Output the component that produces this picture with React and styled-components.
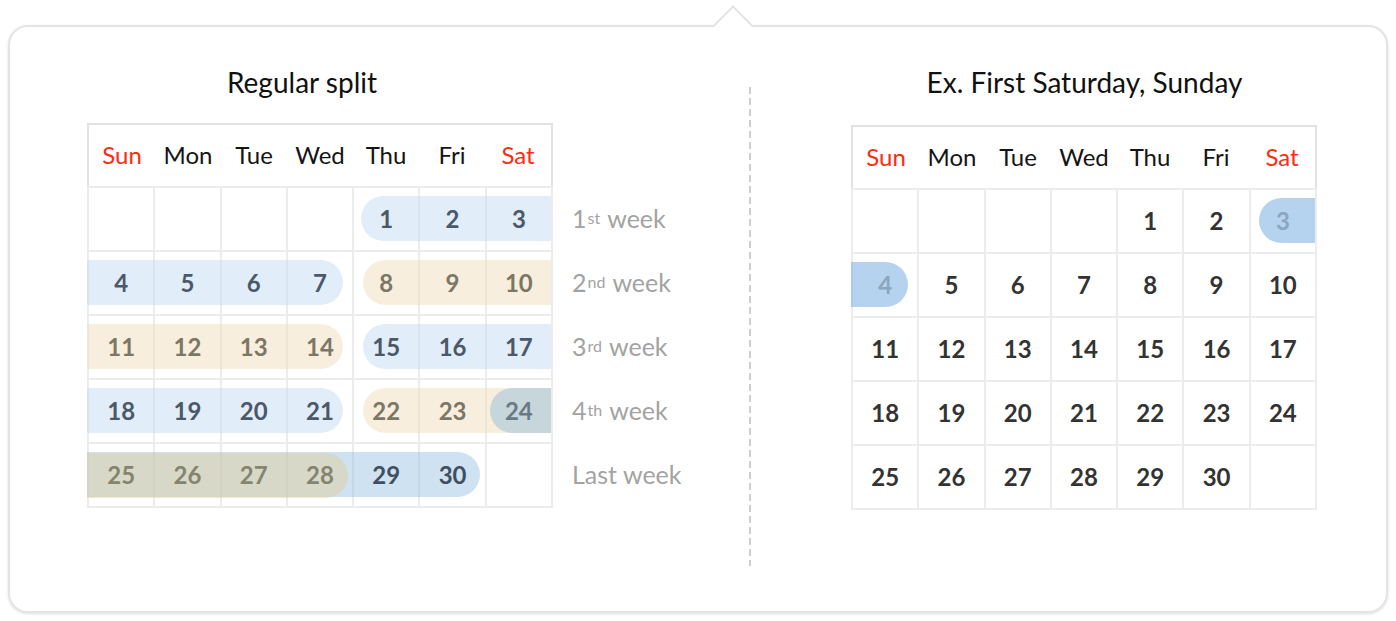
import React from 'react';
import styled, { createGlobalStyle } from 'styled-components';

const Global = createGlobalStyle`
  html, body { margin: 0; padding: 0; background: #fff; }
  body { font-family: Lato, "Noto Sans", sans-serif; }
`;

const Page = styled.div`
  padding: 25px 8px 8px;
`;

const Card = styled.div`
  position: relative;
  box-sizing: border-box;
  width: 1380px;
  height: 588px;
  border: 2px solid #e4e4e4;
  border-radius: 20px;
  box-shadow: 0 1px 3px rgba(0, 0, 0, 0.12);
  background: #fff;
  display: flex;
`;

const Notch = styled.div`
  position: absolute;
  left: 709px;
  top: -16px;
  width: 28px;
  height: 28px;
  box-sizing: border-box;
  background: #fff;
  border-top: 2px solid #e4e4e4;
  border-left: 2px solid #e4e4e4;
  transform: rotate(45deg);
`;

const Section = styled.section`
  box-sizing: border-box;
  width: ${(p) => p.$width}px;
  padding-left: ${(p) => p.$pl}px;
  padding-top: 38px;
  display: flex;
  flex-direction: column;
`;

const Title = styled.h2`
  margin: 0 0 ${(p) => p.$gap}px;
  width: ${(p) => p.$w}px;
  font-weight: 400;
  font-size: 28px;
  line-height: 34px;
  color: #111;
  text-align: center;
`;

const Divider = styled.div`
  flex: none;
  width: 2px;
  height: 479px;
  margin-top: 60px;
  background: repeating-linear-gradient(to bottom, #cfcfcf 0 7px, transparent 7px 11px);
`;

const CalRow = styled.div`
  display: flex;
  gap: 19px;
`;

const Calendar = styled.div`
  width: 466px;
  display: flex;
  flex-direction: column;
`;

const Head = styled.div`
  box-sizing: border-box;
  height: 63px;
  display: grid;
  grid-template-columns: repeat(7, 1fr);
  align-items: center;
  border: 2px solid #e2e2e2;
  border-bottom: none;
  padding-bottom: 2px;
`;

const Day = styled.div`
  text-align: center;
  font-size: 24px;
  color: ${(p) => (p.$weekend ? '#ff2a10' : '#151515')};
`;

const Body = styled.div`
  display: grid;
  grid-template-columns: repeat(7, 1fr);
  grid-template-rows: repeat(5, 64px);
  border-left: 2px solid #ececec;
  border-top: 2px solid #ececec;
`;

const Cell = styled.div`
  grid-row: ${(p) => p.$row};
  grid-column: ${(p) => p.$col};
  border-right: 2px solid #ececec;
  border-bottom: 2px solid #ececec;
  display: flex;
  align-items: center;
  justify-content: center;
  padding-bottom: 2px;
`;

const Num = styled.span`
  position: relative;
  z-index: 2;
  font-size: 24px;
  font-weight: 700;
  color: ${(p) => p.$color};
`;

const tones = {
  blue: 'rgba(200, 222, 244, 0.55)',
  beige: 'rgba(240, 222, 190, 0.5)',
  deep: 'rgba(140, 185, 225, 0.42)',
  overlap: 'rgba(225, 205, 160, 0.5)',
  mix: 'rgba(152, 189, 216, 0.5)',
  strong: 'rgba(120, 175, 225, 0.55)',
};

const Pill = styled.div`
  grid-row: ${(p) => p.$row};
  grid-column: ${(p) => p.$from} / ${(p) => p.$to + 1};
  z-index: 1;
  align-self: center;
  height: 45px;
  margin: ${(p) => (p.$dy || 0) * 2}px ${(p) => p.$mr}px 3px ${(p) => p.$ml}px;
  background: ${(p) => tones[p.$tone]};
  border-radius: ${(p) =>
    `${p.$rl ? 23 : 0}px ${p.$rr ? 23 : 0}px ${p.$rr ? 23 : 0}px ${p.$rl ? 23 : 0}px`};
`;

const Labels = styled.div`
  padding-top: 63px;
  display: flex;
  flex-direction: column;
`;

const Label = styled.div`
  height: 64px;
  display: flex;
  align-items: center;
  font-size: 25px;
  color: #a3a3a3;
  white-space: nowrap;

  sup {
    font-size: 16px;
    line-height: 0;
    vertical-align: 12px;
    margin-left: 1px;
    margin-right: 7px;
  }
`;

const DAYS = ['Sun', 'Mon', 'Tue', 'Wed', 'Thu', 'Fri', 'Sat'];

const numColors = {
  blue: '#4b5867',
  beige: '#7c7664',
  mix: '#6a7a84',
  overlap: '#85846f',
  deep: '#3f4f60',
  plain: '#333333',
  strong: '#8aa6c0',
};

const leftTone = (d) => {
  if (d <= 7) return 'blue';
  if (d <= 14) return 'beige';
  if (d <= 21) return 'blue';
  if (d <= 23) return 'beige';
  if (d === 24) return 'mix';
  if (d <= 28) return 'overlap';
  return 'deep';
};

const rightTone = (d) => (d === 3 || d === 4 ? 'strong' : 'plain');

const leftPills = [
  { row: 1, from: 5, to: 7, tone: 'blue', ml: 7, mr: 2, rl: true },
  { row: 2, from: 1, to: 4, tone: 'blue', ml: -2, mr: 11, rr: true },
  { row: 2, from: 5, to: 7, tone: 'beige', ml: 9, mr: 2, rl: true },
  { row: 3, from: 1, to: 4, tone: 'beige', ml: -2, mr: 11, rr: true },
  { row: 3, from: 5, to: 7, tone: 'blue', ml: 9, mr: 2, rl: true },
  { row: 4, from: 1, to: 4, tone: 'blue', ml: -2, mr: 11, rr: true },
  { row: 4, from: 5, to: 7, tone: 'beige', ml: 9, mr: 2, rl: true },
  { row: 4, from: 7, to: 7, tone: 'mix', ml: 3, mr: 2, rl: true },
  { row: 5, from: 1, to: 6, tone: 'deep', ml: -2, mr: 7, rr: true },
  { row: 5, from: 1, to: 4, tone: 'overlap', ml: -2, mr: 6, rr: true, dy: 1 },
];

const rightPills = [
  { row: 1, from: 7, to: 7, tone: 'strong', ml: 8, mr: 2, rl: true },
  { row: 2, from: 1, to: 1, tone: 'strong', ml: -2, mr: 11, rr: true },
];

const MonthGrid = ({ pills, toneOf }) => {
  const cells = [];
  for (let i = 0; i < 35; i++) {
    const day = i - 3;
    const row = Math.floor(i / 7) + 1;
    const col = (i % 7) + 1;
    const valid = day >= 1 && day <= 30;
    cells.push(
      <Cell key={i} $row={row} $col={col}>
        {valid && <Num $color={numColors[toneOf(day)]}>{day}</Num>}
      </Cell>
    );
  }
  return (
    <Calendar>
      <Head>
        {DAYS.map((d) => (
          <Day key={d} $weekend={d === 'Sun' || d === 'Sat'}>
            {d}
          </Day>
        ))}
      </Head>
      <Body>
        {cells}
        {pills.map((p, i) => (
          <Pill
            key={'p' + i}
            $row={p.row}
            $from={p.from}
            $to={p.to}
            $tone={p.tone}
            $ml={p.ml}
            $mr={p.mr}
            $rl={p.rl}
            $rr={p.rr}
            $dy={p.dy}
          />
        ))}
      </Body>
    </Calendar>
  );
};

const WEEKS = [
  ['1', 'st'],
  ['2', 'nd'],
  ['3', 'rd'],
  ['4', 'th'],
];

export default function App() {
  return (
    <>
      <Global />
      <Page>
        <Card>
          <Notch />
          <Section $width={739} $pl={77}>
            <Title $w={430} $gap={24}>Regular split</Title>
            <CalRow>
              <MonthGrid pills={leftPills} toneOf={leftTone} />
              <Labels>
                {WEEKS.map(([n, s]) => (
                  <Label key={n}>
                    {n}
                    <sup>{s}</sup>week
                  </Label>
                ))}
                <Label>Last week</Label>
              </Labels>
            </CalRow>
          </Section>
          <Divider />
          <Section $width={635} $pl={100}>
            <Title $w={467} $gap={26}>Ex. First Saturday, Sunday</Title>
            <MonthGrid pills={rightPills} toneOf={rightTone} />
          </Section>
        </Card>
      </Page>
    </>
  );
}
